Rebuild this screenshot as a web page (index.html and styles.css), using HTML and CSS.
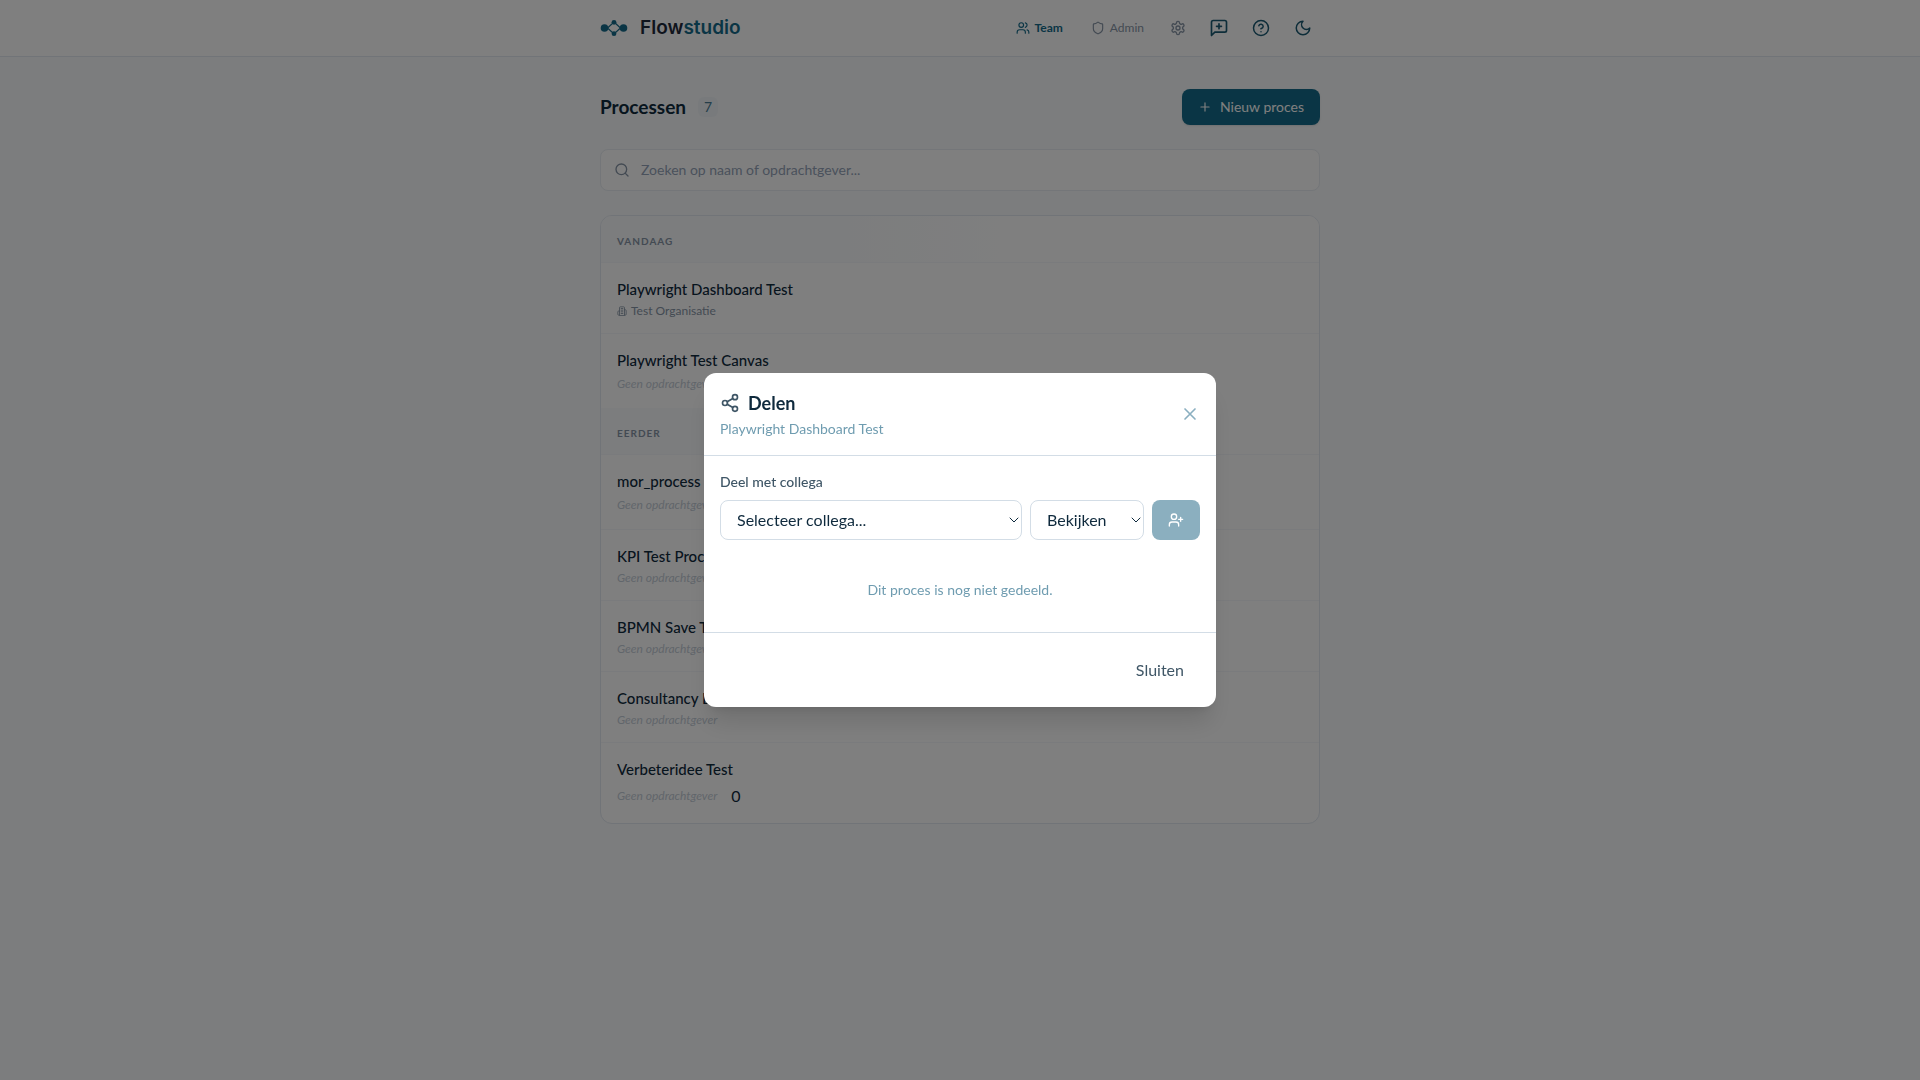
FILE: index.html
```html
<!DOCTYPE html>
<html lang="nl">
<head>
    <meta charset="utf-8">
    <meta name="viewport" content="width=device-width, initial-scale=1.0">
    <title>Flowstudio - Processen</title>
    <link rel="stylesheet" href="styles.css">
</head>
<body>
    <header class="topbar">
        <div class="container topbar-inner">
            <a class="logo" href="#">
                <svg width="28" height="18" viewBox="0 0 28 18" fill="none" stroke="currentColor">
                    <path d="M4 9h3.500M20.500 9H24" stroke-width="2"/>
                    <path d="M14 3l6.500 6-6.500 6-6.500-6z" stroke-width="1.200"/>
                    <g fill="currentColor" stroke="none">
                        <circle cx="4.500" cy="9" r="3.800"/>
                        <circle cx="23.500" cy="9" r="3.800"/>
                        <circle cx="14" cy="3.300" r="2.400"/>
                        <circle cx="14" cy="14.700" r="2.400"/>
                    </g>
                </svg>
                <span class="logo-text">Flow<span class="logo-accent">studio</span></span>
            </a>
            <nav class="nav">
                <a class="nav-link active" href="#">
                    <svg class="icon" width="14" height="14" viewBox="0 0 24 24"><path d="M16 21v-2a4 4 0 0 0-4-4H6a4 4 0 0 0-4 4v2"/><circle cx="9" cy="7" r="4"/><path d="M22 21v-2a4 4 0 0 0-3-3.870"/><path d="M16 3.130a4 4 0 0 1 0 7.750"/></svg>
                    Team
                </a>
                <a class="nav-link" href="#">
                    <svg class="icon" width="14" height="14" viewBox="0 0 24 24"><path d="M20 13c0 5-3.500 7.500-7.660 8.950a1 1 0 0 1-.67-.01C7.500 20.500 4 18 4 13V6a1 1 0 0 1 1-1c2 0 4.500-1.200 6.240-2.720a1.170 1.170 0 0 1 1.520 0C14.510 3.810 17 5 19 5a1 1 0 0 1 1 1z"/></svg>
                    Admin
                </a>
                <button class="icon-btn small" type="button" aria-label="Instellingen">
                    <svg class="icon" width="16" height="16" viewBox="0 0 24 24"><path d="M12.220 2h-.44a2 2 0 0 0-2 2v.18a2 2 0 0 1-1 1.730l-.43.25a2 2 0 0 1-2 0l-.15-.08a2 2 0 0 0-2.730.73l-.22.38a2 2 0 0 0 .73 2.730l.15.1a2 2 0 0 1 1 1.720v.51a2 2 0 0 1-1 1.740l-.15.09a2 2 0 0 0-.73 2.730l.22.38a2 2 0 0 0 2.730.73l.15-.08a2 2 0 0 1 2 0l.43.25a2 2 0 0 1 1 1.730V20a2 2 0 0 0 2 2h.44a2 2 0 0 0 2-2v-.18a2 2 0 0 1 1-1.730l.43-.25a2 2 0 0 1 2 0l.15.08a2 2 0 0 0 2.730-.73l.22-.39a2 2 0 0 0-.73-2.730l-.15-.08a2 2 0 0 1-1-1.740v-.5a2 2 0 0 1 1-1.740l.15-.09a2 2 0 0 0 .73-2.730l-.22-.38a2 2 0 0 0-2.730-.73l-.15.08a2 2 0 0 1-2 0l-.43-.25a2 2 0 0 1-1-1.730V4a2 2 0 0 0-2-2z"/><circle cx="12" cy="12" r="3"/></svg>
                </button>
                <button class="icon-btn" type="button" aria-label="Feedback">
                    <svg class="icon" width="20" height="20" viewBox="0 0 24 24"><path d="M21 15a2 2 0 0 1-2 2H7l-4 4V5a2 2 0 0 1 2-2h14a2 2 0 0 1 2 2z"/><path d="M12 7v6M9 10h6"/></svg>
                </button>
                <button class="icon-btn" type="button" aria-label="Help">
                    <svg class="icon" width="18" height="18" viewBox="0 0 24 24"><circle cx="12" cy="12" r="10"/><path d="M9.090 9a3 3 0 0 1 5.830 1c0 2-3 3-3 3M12 17h.01"/></svg>
                </button>
                <button class="icon-btn" type="button" aria-label="Donkere modus">
                    <svg class="icon" width="18" height="18" viewBox="0 0 24 24"><path d="M12 3a6 6 0 0 0 9 9 9 9 0 1 1-9-9z"/></svg>
                </button>
            </nav>
        </div>
    </header>

    <main class="container main">
        <div class="page-head">
            <h1>Processen</h1>
            <span class="count">7</span>
            <button class="btn-primary" type="button">
                <svg class="icon" width="14" height="14" viewBox="0 0 24 24"><path d="M5 12h14M12 5v14"/></svg>
                Nieuw proces
            </button>
        </div>

        <label class="search">
            <svg class="icon" width="16" height="16" viewBox="0 0 24 24"><circle cx="11" cy="11" r="8"/><path d="M21 21l-4.300-4.300"/></svg>
            <input type="text" placeholder="Zoeken op naam of opdrachtgever..." aria-label="Zoeken">
        </label>

        <div class="list">
            <h2 class="group">Vandaag</h2>
            <div class="row">
                <div class="row-title">Playwright Dashboard Test</div>
                <div class="row-sub">
                    <svg class="icon" width="10" height="10" viewBox="0 0 24 24"><path d="M6 22V4a2 2 0 0 1 2-2h8a2 2 0 0 1 2 2v18zM6 12H4a2 2 0 0 0-2 2v6a2 2 0 0 0 2 2h2M18 9h2a2 2 0 0 1 2 2v9a2 2 0 0 1-2 2h-2M10 6h4M10 10h4M10 14h4M10 18h4"/></svg>
                    Test Organisatie
                </div>
            </div>
            <div class="row">
                <div class="row-title">Playwright Test Canvas</div>
                <div class="row-sub empty medium">Geen opdrachtgever</div>
            </div>
            <h2 class="group">Eerder</h2>
            <div class="row">
                <div class="row-title">mor_process</div>
                <div class="row-sub empty medium">Geen opdrachtgever</div>
            </div>
            <div class="row">
                <div class="row-title">KPI Test Proces</div>
                <div class="row-sub empty">Geen opdrachtgever</div>
            </div>
            <div class="row">
                <div class="row-title">BPMN Save Test</div>
                <div class="row-sub empty">Geen opdrachtgever</div>
            </div>
            <div class="row">
                <div class="row-title">Consultancy Demo</div>
                <div class="row-sub empty">Geen opdrachtgever</div>
            </div>
            <div class="row">
                <div class="row-title">Verbeteridee Test</div>
                <div class="row-sub empty tall">Geen opdrachtgever <span class="zero">0</span></div>
            </div>
        </div>
    </main>

    <div class="overlay">
        <div class="modal" role="dialog" aria-modal="true" aria-labelledby="share-title">
            <div class="modal-head">
                <div>
                    <h2 id="share-title">
                        <svg class="icon" width="20" height="20" viewBox="0 0 24 24"><circle cx="18" cy="5" r="3"/><circle cx="6" cy="12" r="3"/><circle cx="18" cy="19" r="3"/><path d="M8.590 13.510l6.830 3.980M15.410 6.510l-6.820 3.980"/></svg>
                        Delen
                    </h2>
                    <p class="modal-sub">Playwright Dashboard Test</p>
                </div>
                <button class="close" type="button" aria-label="Sluit venster">
                    <svg class="icon" width="20" height="20" viewBox="0 0 24 24"><path d="M18 6L6 18M6 6l12 12"/></svg>
                </button>
            </div>
            <div class="modal-body">
                <label class="field-label" for="colleague">Deel met collega</label>
                <div class="share-form">
                    <div class="select">
                        <select id="colleague">
                            <option>Selecteer collega...</option>
                        </select>
                        <svg class="icon chevron" width="10" height="6" viewBox="0 0 10 6"><path d="M1 1l4 4 4-4"/></svg>
                    </div>
                    <div class="select role">
                        <select aria-label="Rechten">
                            <option>Bekijken</option>
                            <option>Bewerken</option>
                        </select>
                        <svg class="icon chevron" width="10" height="6" viewBox="0 0 10 6"><path d="M1 1l4 4 4-4"/></svg>
                    </div>
                    <button class="btn-add" type="button" aria-label="Toevoegen" disabled>
                        <svg class="icon" width="16" height="16" viewBox="0 0 24 24"><path d="M16 21v-2a4 4 0 0 0-4-4H6a4 4 0 0 0-4 4v2"/><circle cx="9" cy="7" r="4"/><path d="M19 8v6M22 11h-6"/></svg>
                    </button>
                </div>
                <p class="not-shared">Dit proces is nog niet gedeeld.</p>
            </div>
            <div class="modal-foot">
                <button class="btn-ghost" type="button">Sluiten</button>
            </div>
        </div>
    </div>
</body>
</html>
```
FILE: styles.css
```css
* {
    box-sizing: border-box;
    margin: 0;
}

body {
    min-height: 100vh;
    background: #f8fafc;
    color: #0f2a3d;
    font-family: Lato, "Liberation Sans", sans-serif;
    font-size: 16px;
    line-height: 24px;
}

button, input, select {
    font: inherit;
    color: inherit;
}

button {
    border: none;
    background: none;
    padding: 0;
    cursor: pointer;
}

a {
    color: inherit;
    text-decoration: none;
}

.icon {
    flex: none;
    fill: none;
    stroke: currentColor;
    stroke-width: 2;
    stroke-linecap: round;
    stroke-linejoin: round;
}

.container {
    max-width: 720px;
    margin: 0 auto;
}

/* Topbar */
.topbar {
    background: #fff;
    border-bottom: 1px solid #e2e8f0;
}

.topbar-inner {
    display: flex;
    align-items: center;
    justify-content: space-between;
    height: 56px;
}

.logo {
    display: flex;
    align-items: center;
    gap: 12px;
    color: #156b8a;
}

.logo-text {
    font-family: Inter, sans-serif;
    font-size: 19px;
    font-weight: 600;
    color: #1e293b;
}

.logo-accent {
    color: #156b8a;
}

.nav {
    display: flex;
    align-items: center;
    gap: 8px;
}

.nav-link {
    display: flex;
    align-items: center;
    gap: 5px;
    padding: 0 10px;
    font-size: 12px;
    color: #8795a6;
}

.nav-link.active {
    color: #156b8a;
    font-weight: 700;
}

.icon-btn {
    display: flex;
    align-items: center;
    justify-content: center;
    width: 34px;
    height: 34px;
    color: #1b5a73;
}

.icon-btn.small {
    width: 32px;
    color: #8795a6;
}

/* Processen */
.main {
    padding: 32px 0;
}

.page-head {
    display: flex;
    align-items: center;
    gap: 12px;
    margin-bottom: 24px;
}

.page-head h1 {
    font-size: 19px;
    font-weight: 700;
}

.count {
    padding: 0 6px;
    border-radius: 6px;
    background: #f1f5f9;
    color: #4a7d95;
    font-size: 14px;
    line-height: 20px;
}

.btn-primary {
    display: flex;
    align-items: center;
    gap: 8px;
    height: 36px;
    margin-left: auto;
    padding: 0 16px;
    border-radius: 8px;
    background: #156b8a;
    color: #fff;
    font-size: 14px;
    box-shadow: 0 1px 2px rgba(0,0,0,0.1);
}

.search {
    display: flex;
    align-items: center;
    gap: 11px;
    height: 42px;
    margin-bottom: 24px;
    padding: 0 13px;
    border: 1px solid #e8edf2;
    border-radius: 8px;
    background: #fff;
    color: #8795a6;
}

.search input {
    flex: 1;
    padding: 0;
    border: none;
    outline: none;
    background: none;
    font-size: 14px;
}

.search input::placeholder {
    color: #94a3b8;
}

.list {
    border: 1px solid #e2e8f0;
    border-radius: 12px;
    background: #fff;
    overflow: hidden;
}

.group {
    padding: 17px 16px 13px;
    border-bottom: 1px solid #f5f7fa;
    background: linear-gradient(90deg, #f8fafc 30%, #fff 60%);
    color: #8795a6;
    font-size: 10px;
    font-weight: 700;
    line-height: 16px;
    letter-spacing: 1px;
    text-transform: uppercase;
}

.row {
    padding: 14px 16px;
    border-bottom: 1px solid #f5f7fa;
}

.row:last-child,
.row:has(+ .group) {
    border-bottom: none;
}

.row-title {
    font-size: 15px;
    font-weight: 500;
}

.row-sub {
    display: flex;
    align-items: center;
    gap: 4px;
    height: 16px;
    margin-top: 2px;
    color: #8795a6;
    font-size: 12px;
}

.row-sub.empty {
    color: #c3ccd6;
    font-style: italic;
    gap: 14px;
}

.row-sub.medium {
    height: 20px;
}

.row-sub.tall {
    height: 26px;
}

.zero {
    color: #0f2a3d;
    font-size: 16px;
    font-style: normal;
}

/* Deelvenster */
.overlay {
    position: fixed;
    inset: 0;
    display: flex;
    align-items: center;
    justify-content: center;
    background: rgba(0,0,0,0.5);
}

.modal {
    width: 100%;
    max-width: 512px;
    border-radius: 12px;
    background: #fff;
    box-shadow: 0 20px 25px -5px rgba(0,0,0,0.12), 0 8px 10px -6px rgba(0,0,0,0.1);
}

.modal-head {
    display: flex;
    align-items: center;
    justify-content: space-between;
    padding: 16px;
    border-bottom: 1px solid #d3dde6;
}

.modal-head h2 {
    display: flex;
    align-items: center;
    gap: 8px;
    font-size: 18px;
    font-weight: 700;
    line-height: 28px;
}

.modal-head h2 .icon {
    color: #3f5666;
}

.modal-sub {
    margin-top: 2px;
    color: #6f9cb0;
    font-size: 14px;
    line-height: 20px;
}

.close {
    display: flex;
    color: #8aafc0;
}

.modal-body {
    padding: 16px;
}

.field-label {
    display: block;
    margin-bottom: 8px;
    color: #3f5666;
    font-size: 14px;
    font-weight: 500;
    line-height: 20px;
}

.share-form {
    display: flex;
    gap: 8px;
}

.select {
    position: relative;
    flex: 1;
}

.select.role {
    flex: none;
    width: 114px;
}

.select select {
    appearance: none;
    display: block;
    width: 100%;
    height: 40px;
    padding: 0 24px 0 16px;
    border: 1px solid #d3dde6;
    border-radius: 8px;
    background: #fff;
}

/* eigen pijltje over de select */
.chevron {
    position: absolute;
    top: 17px;
    right: 3px;
    stroke-width: 1;
    pointer-events: none;
}

.btn-add {
    display: flex;
    align-items: center;
    justify-content: center;
    width: 48px;
    border-radius: 8px;
    background: #8bafbf;
    color: #fff;
}

.not-shared {
    padding: 40px 0 16px;
    color: #6f9cb0;
    font-size: 14px;
    line-height: 20px;
    text-align: center;
}

.modal-foot {
    display: flex;
    justify-content: flex-end;
    padding: 16px;
    border-top: 1px solid #d3dde6;
}

.btn-ghost {
    height: 42px;
    padding: 0 16px;
    color: #3f5666;
}
```
